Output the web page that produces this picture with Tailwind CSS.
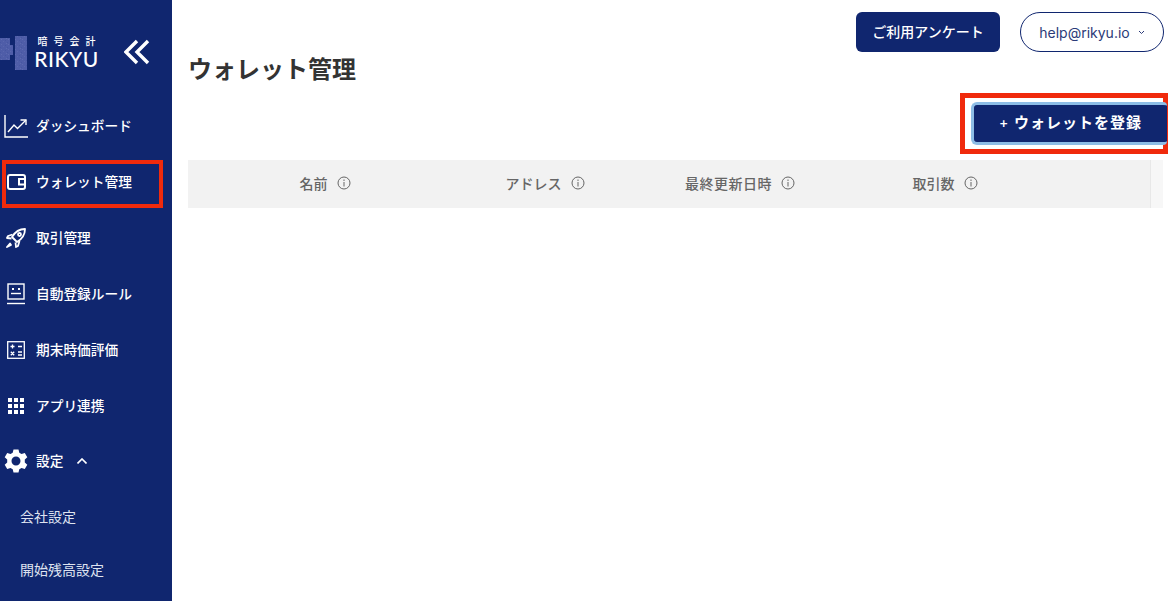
<!DOCTYPE html>
<html lang="ja">
<head>
    <meta charset="UTF-8">
    <meta name="viewport" content="width=device-width, initial-scale=1.0">
    <title>ウォレット管理</title>
    <script src="https://cdn.jsdelivr.net/npm/@tailwindcss/browser@4"></script>
</head>
<body class="bg-white font-['Inter','Noto_Sans_CJK_JP',sans-serif] overflow-hidden">
<div class="flex w-[1169px] h-[601px]">
    <!-- Sidebar -->
    <aside class="w-[172px] h-full shrink-0 bg-[#10266f] text-white overflow-hidden">
        <!-- Logo -->
        <div class="flex items-center h-[98px] pt-[6px]">
            <svg width="28" height="36" viewBox="0 0 28 36" class="shrink-0">
                <defs>
                    <pattern id="speckle" width="7" height="5" patternUnits="userSpaceOnUse">
                        <rect width="7" height="5" fill="#4f5da8"/>
                        <rect x="1" y="0" width="1" height="1" fill="#5d6ab0"/>
                        <rect x="5" y="1" width="1" height="1" fill="#4656a2"/>
                        <rect x="3" y="2" width="1" height="1" fill="#5a67ae"/>
                        <rect x="0" y="3" width="1" height="1" fill="#4656a2"/>
                        <rect x="6" y="4" width="1" height="1" fill="#5d6ab0"/>
                    </pattern>
                </defs>
                <path d="M0 4 H10 V11 H13 V21 H10 V26 H0 Z" fill="url(#speckle)"/>
                <rect x="15" y="2" width="12" height="34" fill="url(#speckle)"/>
            </svg>
            <div class="ml-[5px] w-[67px] flex flex-col items-center">
                <span class="text-[10px] leading-[14px] font-medium tracking-[6px] ml-[6px] whitespace-nowrap">暗号会計</span>
                <span class="text-[21px] leading-[22px] font-['Lato'] font-medium tracking-[0.5px]">RIKYU</span>
            </div>
            <svg width="26" height="26" viewBox="0 0 26 26" fill="none" stroke="white" stroke-width="3.400" class="ml-[24px]">
                <path d="M13 2 L2 13 L13 24"/>
                <path d="M24 2 L13 13 L24 24"/>
            </svg>
        </div>
        <nav class="text-[13.7px] font-medium">
            <a class="flex items-center h-[56px] pl-1">
                <svg width="24" height="24" viewBox="0 0 24 24" fill="none" stroke="white" stroke-width="1.400">
                    <path d="M1 1 V23 H24"/>
                    <path d="M4 18 L10 11 L13.500 14.500 L22 6"/>
                    <path d="M16.500 6 H22 V11"/>
                </svg>
                <span class="ml-2">ダッシュボード</span>
            </a>
            <a class="flex items-center h-[56px] pl-[7px] relative">
                <svg width="19" height="16" viewBox="0 0 19 16" fill="none" stroke="white" stroke-width="2">
                    <rect x="1" y="1" width="17" height="14" rx="2"/>
                    <path d="M18 5 H12 V10.500 H18"/>
                </svg>
                <span class="ml-[10px]">ウォレット管理</span>
                <div class="absolute left-[2px] top-[6px] w-[161px] h-[48px] border-4 border-[#f02a0c]"></div>
            </a>
            <a class="flex items-center h-[56px] pl-[6px]">
                <svg width="20" height="20" viewBox="0 0 20 20" fill="none" stroke="white" stroke-width="1.800" stroke-linejoin="round">
                    <path d="M6 9 C9 4 13 1 19 1 C19 7 16 11 11 14 L6 9 Z"/>
                    <path d="M6.500 6.500 L2 8 L1 10 L5.500 10.500"/>
                    <path d="M13.500 13 L12 18 L10 19 L9.500 14.500"/>
                    <circle cx="13.500" cy="6.500" r="1.500"/>
                    <path d="M1 19 L4 15.500 L5 17 Z" fill="white"/>
                </svg>
                <span class="ml-[10px]">取引管理</span>
            </a>
            <a class="flex items-center h-[56px] pl-[7px]">
                <svg width="18" height="22" viewBox="0 0 18 22" fill="none" stroke="white" stroke-width="1.400">
                    <rect x="1" y="1" width="16" height="15"/>
                    <path d="M0 20.500 H18"/>
                    <path d="M4 10.500 H14"/>
                    <rect x="5" y="5" width="2" height="2" fill="white" stroke="none"/>
                    <rect x="11" y="5" width="2" height="2" fill="white" stroke="none"/>
                </svg>
                <span class="ml-[11px]">自動登録ルール</span>
            </a>
            <a class="flex items-center h-[56px] pl-[7px]">
                <svg width="18" height="18" viewBox="0 0 18 18" fill="none" stroke="white" stroke-width="1.300">
                    <rect x="0.700" y="0.700" width="16.600" height="16.600"/>
                    <path d="M3.500 5.500 H7.500 M5.500 3.500 V7.500 M11 5.500 H15 M3.800 10.800 L7.200 14.200 M7.200 10.800 L3.800 14.200 M11 11 H15 M11 14 H15"/>
                </svg>
                <span class="ml-[11px]">期末時価評価</span>
            </a>
            <a class="flex items-center h-[56px] pl-2">
                <div class="grid grid-cols-3 gap-[2px] w-4 shrink-0">
                    <i class="size-1 bg-white"></i><i class="size-1 bg-white"></i><i class="size-1 bg-white"></i>
                    <i class="size-1 bg-white"></i><i class="size-1 bg-white"></i><i class="size-1 bg-white"></i>
                    <i class="size-1 bg-white"></i><i class="size-1 bg-white"></i><i class="size-1 bg-white"></i>
                </div>
                <span class="ml-3">アプリ連携</span>
            </a>
            <a class="flex items-center h-[54px] pl-1">
                <svg width="24" height="24" viewBox="0 0 24 24" fill="white">
                    <path fill-rule="evenodd" d="M9.500 0.500 H14.500 L15.300 3.800 L17.500 5 L20.800 4 L23.300 8.200 L20.800 10.600 V13.400 L23.300 15.800 L20.800 20 L17.500 19 L15.300 20.200 L14.500 23.500 H9.500 L8.700 20.200 L6.500 19 L3.200 20 L0.700 15.800 L3.200 13.400 V10.600 L0.700 8.200 L3.200 4 L6.500 5 L8.700 3.800 Z M12 7.500 A4.500 4.500 0 1 0 12 16.500 A4.500 4.500 0 1 0 12 7.500 Z"/>
                </svg>
                <span class="ml-2">設定</span>
                <svg width="10" height="6" viewBox="0 0 10 6" fill="none" stroke="white" stroke-width="1.600" class="ml-[14px]">
                    <path d="M0.500 5.500 L5 1 L9.500 5.500"/>
                </svg>
            </a>
            <a class="flex items-center h-[56px] pl-5 text-[14px] font-normal text-[#dfe3f0]">会社設定</a>
            <a class="flex items-center h-[50px] pl-5 text-[14px] font-normal text-[#dfe3f0]">開始残高設定</a>
        </nav>
    </aside>

    <!-- Main -->
    <main class="flex-1 min-w-0 relative">
        <div class="flex justify-end items-center gap-5 pt-3 pr-[5px]">
            <button class="w-[144px] h-10 pb-[2px] rounded-md bg-[#10266f] text-white text-[14px] font-medium">ご利用アンケート</button>
            <button class="flex items-center justify-center gap-2 w-[144px] h-10 rounded-full border border-[#10266f] text-[#2b3a78] text-[14px]">
                help@rikyu.io
                <svg width="7" height="5" viewBox="0 0 7 5" fill="none" stroke="#2b3a78" stroke-width="1"><path d="M1 1 L3.500 3.500 L6 1"/></svg>
            </button>
        </div>
        <h1 class="ml-4 mt-[1px] text-[24px] leading-[34px] font-bold text-[#333]">ウォレット管理</h1>

        <div class="flex justify-end mt-[6px] h-[61px]">
            <div class="w-[208px] h-[61px] border-[5px] border-[#f02a0c] mr-[1px] pl-[6px] pt-[4px]">
                <button class="w-[196px] h-[43px] rounded-l-md rounded-r-sm bg-[#10266f] border-[3px] border-r-0 border-[#8dbde6] text-white text-[15px] font-bold tracking-[1px]"><span class="text-[14px] font-medium">+</span> ウォレットを登録</button>
            </div>
        </div>

        <div class="flex mt-[6px] ml-4 h-[48px] w-[975px] text-[14px] font-medium text-[#666]">
            <div class="flex h-full w-[962px] bg-[#f2f2f2]">
                <div class="w-[274px] flex items-center justify-center gap-[9px] pb-[2px]">名前
                    <svg width="14" height="14" viewBox="0 0 14 14" fill="none" stroke="#666" stroke-width="1"><circle cx="7" cy="7" r="6"/><path d="M7 6 V10.500 M7 3.500 V5"/></svg>
                </div>
                <div class="w-[166px] flex items-center justify-center gap-[9px] pb-[2px]">アドレス
                    <svg width="14" height="14" viewBox="0 0 14 14" fill="none" stroke="#666" stroke-width="1"><circle cx="7" cy="7" r="6"/><path d="M7 6 V10.500 M7 3.500 V5"/></svg>
                </div>
                <div class="w-[224px] flex items-center justify-center gap-[9px] pb-[2px] tracking-[0.5px]">最終更新日時
                    <svg width="14" height="14" viewBox="0 0 14 14" fill="none" stroke="#666" stroke-width="1"><circle cx="7" cy="7" r="6"/><path d="M7 6 V10.500 M7 3.500 V5"/></svg>
                </div>
                <div class="w-[186px] flex items-center justify-center gap-[9px] pb-[2px]">取引数
                    <svg width="14" height="14" viewBox="0 0 14 14" fill="none" stroke="#666" stroke-width="1"><circle cx="7" cy="7" r="6"/><path d="M7 6 V10.500 M7 3.500 V5"/></svg>
                </div>
            </div>
            <div class="flex-1 h-full bg-[#f7f7f7] border-l border-[#e8e8e8]"></div>
        </div>
    </main>
</div>
</body>
</html>
